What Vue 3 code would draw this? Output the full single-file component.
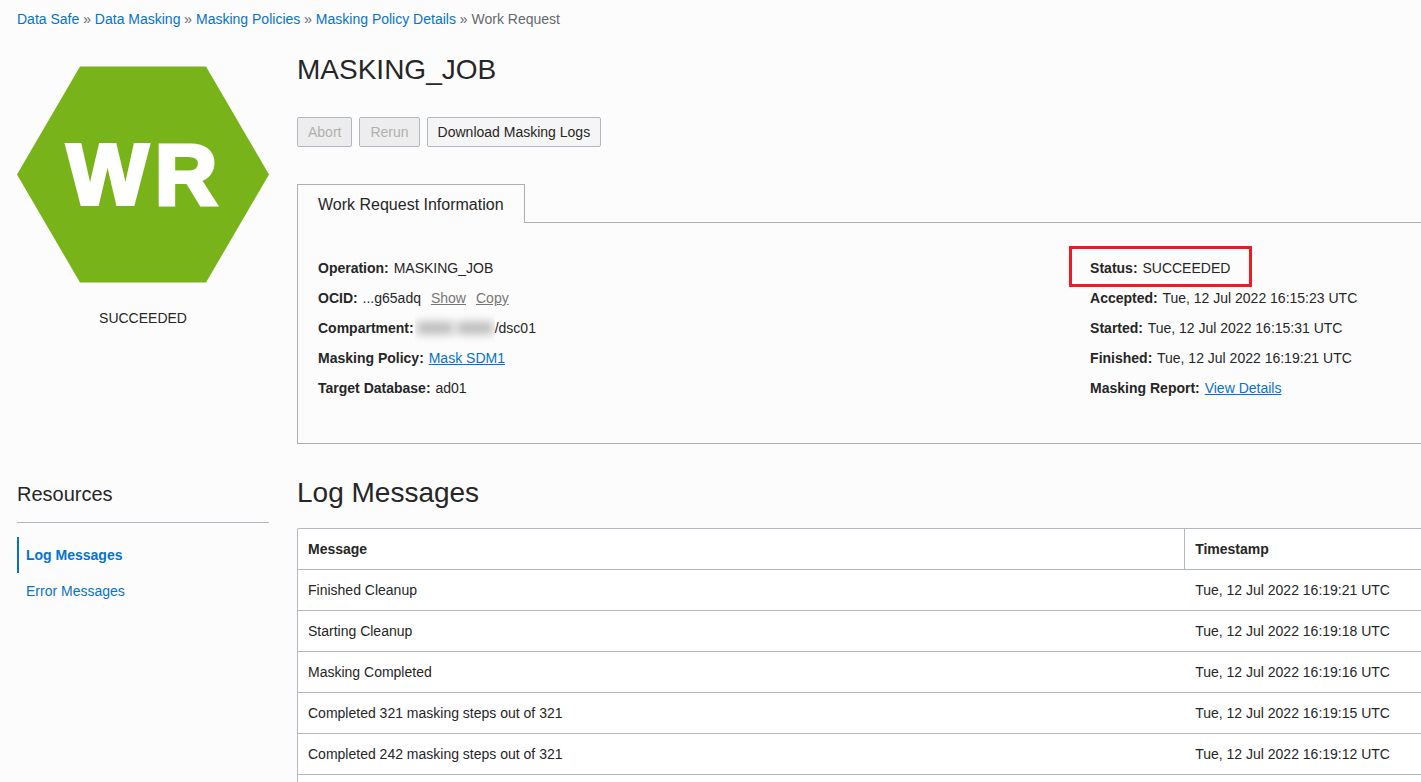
<script setup>
const crumbs = ['Data Safe', 'Data Masking', 'Masking Policies', 'Masking Policy Details']

const times = [
  { label: 'Accepted:', value: 'Tue, 12 Jul 2022 16:15:23 UTC' },
  { label: 'Started:', value: 'Tue, 12 Jul 2022 16:15:31 UTC' },
  { label: 'Finished:', value: 'Tue, 12 Jul 2022 16:19:21 UTC' },
]

const logs = [
  { message: 'Finished Cleanup', time: 'Tue, 12 Jul 2022 16:19:21 UTC' },
  { message: 'Starting Cleanup', time: 'Tue, 12 Jul 2022 16:19:18 UTC' },
  { message: 'Masking Completed', time: 'Tue, 12 Jul 2022 16:19:16 UTC' },
  { message: 'Completed 321 masking steps out of 321', time: 'Tue, 12 Jul 2022 16:19:15 UTC' },
  { message: 'Completed 242 masking steps out of 321', time: 'Tue, 12 Jul 2022 16:19:12 UTC' },
]
</script>

<template>
  <div class="page">
    <nav class="crumbs" aria-label="Breadcrumb">
      <template v-for="c in crumbs" :key="c"><a href="#">{{ c }}</a> » </template>
      <span>Work Request</span>
    </nav>

    <div class="layout">
      <div class="badge">
        <svg class="hexagon" viewBox="0 0 252 217" role="img" aria-label="WR">
          <polygon points="63,0.5 189,0.5 252,108.5 189,216.5 63,216.5 0,108.5" fill="#78b419" />
          <text class="initials" x="50 138" y="138">WR</text>
        </svg>
        <div class="state">SUCCEEDED</div>
      </div>

      <main class="details">
        <h1>MASKING_JOB</h1>
        <div class="actions">
          <button type="button" disabled>Abort</button>
          <button type="button" disabled>Rerun</button>
          <button type="button">Download Masking Logs</button>
        </div>

        <div class="tabs" role="tablist">
          <button type="button" class="tab" role="tab" aria-selected="true">Work Request Information</button>
        </div>
        <div class="panel" role="tabpanel">
          <div>
            <div class="row"><b>Operation:</b> MASKING_JOB</div>
            <div class="row">
              <b>OCID:</b> ...g65adq<a class="muted" href="#">Show</a><a class="muted" href="#">Copy</a>
            </div>
            <div class="row compartment"><b>Compartment:</b><span class="redacted"><i></i><i></i></span><span>/dsc01</span></div>
            <div class="row"><b>Masking Policy:</b> <a class="underlined" href="#">Mask SDM1</a></div>
            <div class="row"><b>Target Database:</b> ad01</div>
          </div>
          <div>
            <div class="row"><span class="marked"><b>Status:</b> SUCCEEDED</span></div>
            <div v-for="t in times" :key="t.label" class="row"><b>{{ t.label }}</b> {{ t.value }}</div>
            <div class="row"><b>Masking Report:</b> <a class="underlined" href="#">View Details</a></div>
          </div>
        </div>
      </main>

      <aside class="resources">
        <h3>Resources</h3>
        <ul>
          <li class="active"><a href="#">Log Messages</a></li>
          <li><a href="#">Error Messages</a></li>
        </ul>
      </aside>

      <section class="log">
        <h2>Log Messages</h2>
        <div class="sheet">
          <table>
            <thead>
              <tr><th class="message" scope="col">Message</th><th scope="col">Timestamp</th></tr>
            </thead>
            <tbody>
              <tr v-for="l in logs" :key="l.time">
                <td>{{ l.message }}</td>
                <td class="time">{{ l.time }}</td>
              </tr>
            </tbody>
          </table>
        </div>
      </section>
    </div>
  </div>
</template>

<style>
body {
  margin: 0;
  background: #fcfcfc;
}
</style>

<style scoped>
.page {
  box-sizing: border-box;
  min-height: 100vh;
  display: flex;
  flex-direction: column;
  padding: 10px 0 0 17px;
  font: 14px/18px "Liberation Sans", Arial, sans-serif;
  color: #262626;
}
a {
  color: #0572ce;
  text-decoration: none;
}
a.underlined {
  text-decoration: underline;
}
a.muted {
  margin-left: 10px;
  color: #767676;
  text-decoration: underline;
}
.crumbs {
  margin-bottom: 21px;
  color: #66696e;
}
.layout {
  flex: 1;
  display: grid;
  grid-template-columns: 252px minmax(0, 1fr);
  grid-template-rows: auto 1fr;
  gap: 28px;
}
.badge {
  padding-top: 17px;
}
.hexagon {
  display: block;
  width: 100%;
}
.initials {
  font: 700 86px "Liberation Sans", Arial, sans-serif;
  fill: #fff;
  stroke: #fff;
  stroke-width: 4px;
}
.state {
  margin-top: 26px;
  text-align: center;
}
h1,
h2,
h3 {
  margin: 0;
  font-weight: 400;
}
h1,
h2 {
  font-size: 28px;
  line-height: 42px;
}
.actions {
  display: flex;
  gap: 7px;
  margin: 26px 0 37px;
}
.actions button {
  height: 30px;
  padding: 0 10px;
  border: 1px solid #b1b8c2;
  border-radius: 2px;
  background: #f5f5f5;
  font: inherit;
  color: #262626;
}
.actions button:disabled {
  background: #ededed;
  color: #b0b0b0;
}
.tabs {
  display: flex;
}
.tabs::after {
  content: "";
  flex: 1;
  border-bottom: 1px solid #aeaeae;
}
.tab {
  height: 39px;
  padding: 2px 20px 0;
  border: 1px solid #aeaeae;
  border-bottom: 0;
  background: none;
  font: inherit;
  font-size: 16px;
  color: #262626;
}
.panel {
  display: grid;
  grid-template-columns: 7fr 3fr;
  padding: 30px 0 40px 20px;
  border-left: 1px solid #aeaeae;
  border-bottom: 1px solid #aeaeae;
}
.row {
  line-height: 30px;
  white-space: nowrap;
}
.row b {
  margin-right: 1px;
}
.compartment {
  display: flex;
}
.redacted {
  display: flex;
  align-items: center;
  justify-content: center;
  gap: 4px;
  width: 80px;
  height: 30px;
  overflow: hidden;
}
.redacted i {
  width: 36px;
  height: 12px;
  background: #b8b8b8;
  filter: blur(5px);
}
.marked {
  position: relative;
}
.marked::after {
  content: "";
  position: absolute;
  inset: -14px -22px -11px -21px;
  border: 3px solid #ed1c24;
}
.resources {
  padding-top: 10px;
}
h3 {
  padding-bottom: 16px;
  border-bottom: 1px solid #b1b8c2;
  font-size: 20px;
  line-height: 24px;
}
ul {
  margin: 14px 0 0;
  padding: 0;
  list-style: none;
}
li {
  padding-left: 7px;
  border-left: 2px solid transparent;
  line-height: 36px;
}
li.active {
  border-color: #0572ce;
  font-weight: 700;
}
.log {
  display: flex;
  flex-direction: column;
}
.sheet {
  flex: 1;
  margin-top: 14px;
  border: 1px solid #b1b8c2;
  border-width: 1px 0 0 1px;
  border-top-left-radius: 2px;
  background: #fff;
}
table {
  width: 100%;
  table-layout: fixed;
  border-spacing: 0;
}
th,
td {
  box-sizing: border-box;
  height: 41px;
  padding: 0 10px;
  border-bottom: 1px solid #b1b8c2;
  text-align: left;
}
th.message {
  width: 79%;
  border-right: 1px solid #b1b8c2;
}
td.time {
  white-space: nowrap;
}
</style>
